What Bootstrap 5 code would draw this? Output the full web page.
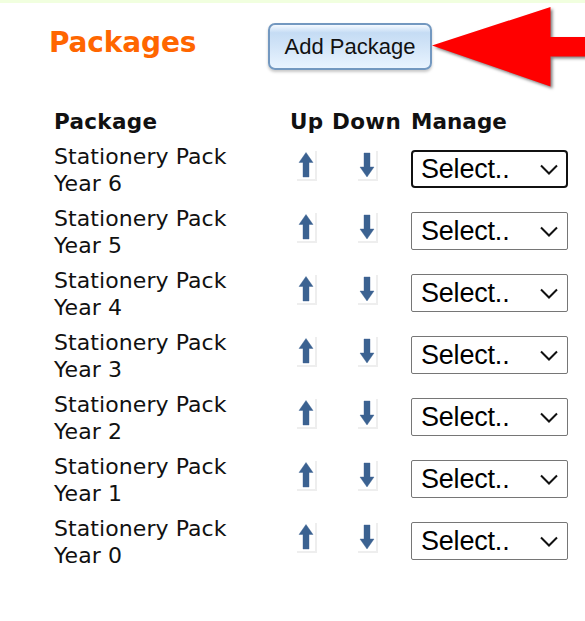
<!DOCTYPE html>
<html lang="en">
<head>
<meta charset="utf-8">
<meta name="viewport" content="width=device-width, initial-scale=1">
<title>Packages</title>
<link href="https://cdn.jsdelivr.net/npm/bootstrap@5.3.0/dist/css/bootstrap.min.css" rel="stylesheet">
<style>
body{font-family:Verdana,"DejaVu Sans",sans-serif;color:#111;background:#fff;overflow:hidden;height:621px}
.top-strip{height:3px;background:#f1ffdf}
.page-head{height:101px;padding:20px 0 0 49px}
.page-title{width:219px;color:#f60;font-size:28px;line-height:40px;letter-spacing:-.15px}
.btn-add{width:164px;height:47px;padding:0;border:2px solid #7398c0;border-radius:7px;background:linear-gradient(#f4f9ff 0,#c5dcf4 18%,#d0e3f7 45%,#e9f4ff 100%);color:#111;font:22px/42px "Liberation Sans",Arial,sans-serif;box-shadow:0 2px 3px rgba(0,0,0,.22)}
.pointer{width:153px;height:92px;margin-top:-20px;filter:drop-shadow(2px 2px 1.5px rgba(0,0,0,.5))}
.pack-table{width:514px;margin-left:54px;table-layout:fixed;font-size:22px;line-height:27px;color:#111}
.pack-table th{height:34px;font-size:21.5px;white-space:nowrap;letter-spacing:.3px}
.pack-table th:last-child{letter-spacing:.05px}
.pack-table td{height:62px}
.pack-name{width:190px;letter-spacing:.08px;padding-top:2px}
.move{width:20px;height:30px;display:block;margin-top:-7px}
.pick{width:157px;height:38px;padding:0 0 0 9px;border:1px solid #767676;border-radius:2px;color:#000;font:27px/34px "Liberation Sans",Arial,sans-serif;letter-spacing:-.2px;background:#fff url("data:image/svg+xml,%3Csvg xmlns='http://www.w3.org/2000/svg' width='18' height='12' viewBox='0 0 18 12'%3E%3Cpath d='M1 1.5 9 9.5 17 1.5' fill='none' stroke='%23111' stroke-width='2'/%3E%3C/svg%3E") no-repeat right 9px top 13px/18px 12px}
.pick.current{border:2px solid #111;border-radius:4px;padding-left:8px;background-position:right 8px top 12px}
</style>
</head>
<body>
<svg class="d-none" aria-hidden="true">
<symbol id="up" viewBox="0 0 20 30"><path d="M19 0v29M0 29h20" stroke="#eee" stroke-width="2" fill="none"/><path d="M9 1.500 16 11.500H12V26H6V11.500H2z" fill="#3b6291" stroke="#3b6291" stroke-opacity=".4"/></symbol>
<symbol id="down" viewBox="0 0 20 30"><path d="M19 0v29M0 29h20" stroke="#eee" stroke-width="2" fill="none"/><path d="M6 2h6v14h4L9 26 2 16H6z" fill="#3b6291" stroke="#3b6291" stroke-opacity=".4"/></symbol>
</svg>
<div class="top-strip"></div>
<header class="page-head d-flex align-items-start">
<h1 class="page-title fw-bold m-0">Packages</h1>
<button type="button" class="btn btn-add flex-shrink-0">Add Package</button>
<svg class="pointer flex-shrink-0" viewBox="0 3 153 92" aria-hidden="true"><path d="M0 45.500 118.500 7V37H160V56.500H118.500V86.500z" fill="#f00"/></svg>
</header>
<main>
<table class="pack-table">
<colgroup><col style="width:236px"><col style="width:42px"><col style="width:79px"><col style="width:157px"></colgroup>
<thead><tr><th class="p-0">Package</th><th class="p-0">Up</th><th class="p-0">Down</th><th class="p-0">Manage</th></tr></thead>
<tbody id="packs"></tbody>
</table>
</main>
<script src="https://cdn.jsdelivr.net/npm/bootstrap@5.3.0/dist/js/bootstrap.bundle.min.js"></script>
<script>
document.getElementById('packs').innerHTML=[6,5,4,3,2,1,0].map((y,i)=>`<tr>
<td class="p-0 align-middle"><div class="pack-name">Stationery Pack Year ${y}</div></td>
<td class="p-0 align-middle"><svg class="move" style="margin-left:7px"><use href="#up"/></svg></td>
<td class="p-0 align-middle"><svg class="move" style="margin-left:26px"><use href="#down"/></svg></td>
<td class="p-0 align-middle"><select class="form-select pick ${i?'':'current'}" aria-label="Manage Year ${y}"><option>Select..</option></select></td></tr>`).join('');
</script>
</body>
</html>
